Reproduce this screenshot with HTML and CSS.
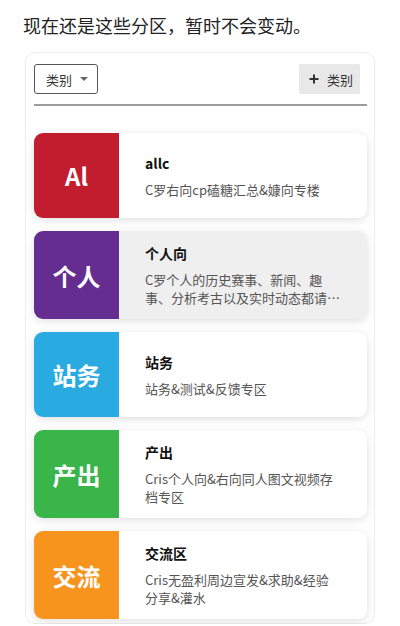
FILE: index.html
```html
<!DOCTYPE html>
<html lang="zh">
<head>
<meta charset="utf-8">
<link rel="stylesheet" href="styles.css">
</head>
<body>
<div class="page">
  <p class="intro">现在还是这些分区，暂时不会变动。</p>
  <div class="panel">
    <div class="toolbar">
      <div class="select">类别<span class="caret"></span></div>
      <div class="add">
        <svg class="plus" width="10" height="10" viewBox="0 0 10 10"><path d="M5 0.5V9.5M0.5 5H9.5" stroke="#333" stroke-width="2"/></svg>
        <span>类别</span>
      </div>
    </div>
    <div class="divider"></div>
    <div class="list">
      <div class="cat">
        <div class="badge red">Al</div>
        <div class="info"><div class="name">allc</div><div class="desc">C罗右向cp磕糖汇总&amp;嫝向专楼</div></div>
      </div>
      <div class="cat active">
        <div class="badge purple">个人</div>
        <div class="info"><div class="name">个人向</div><div class="desc clamp">C罗个人的历史赛事、新闻、趣事、分析考古以及实时动态都请发在这里</div></div>
      </div>
      <div class="cat">
        <div class="badge blue">站务</div>
        <div class="info"><div class="name">站务</div><div class="desc">站务&amp;测试&amp;反馈专区</div></div>
      </div>
      <div class="cat">
        <div class="badge green">产出</div>
        <div class="info"><div class="name">产出</div><div class="desc">Cris个人向&amp;右向同人图文视频存档专区</div></div>
      </div>
      <div class="cat">
        <div class="badge orange">交流</div>
        <div class="info"><div class="name">交流区</div><div class="desc">Cris无盈利周边宣发&amp;求助&amp;经验分享&amp;灌水</div></div>
      </div>
    </div>
  </div>
</div>
</body>
</html>
```
FILE: styles.css
```css
* { box-sizing: border-box; }
body {
  margin: 0;
  background: #fff;
  font-family: "Noto Sans CJK SC", "Noto Sans", sans-serif;
  color: #222;
}
.page { padding: 0 25px; }
.intro {
  margin: 12px 0 0 -2px;
  font-size: 18px;
  line-height: 26px;
  color: #222;
}
.panel {
  margin-top: 14px;
  border: 1px solid #ececec;
  border-radius: 10px;
  padding: 11px 7px 4px 8px;
}
.toolbar {
  display: flex;
  justify-content: space-between;
  align-items: center;
  padding-right: 7px;
}
.select {
  width: 64px;
  height: 30px;
  border: 1px solid #555;
  border-radius: 3px;
  display: flex;
  align-items: center;
  padding-left: 11px;
  font-size: 13px;
  color: #333;
}
.caret {
  width: 0; height: 0;
  margin-left: 8px;
  border-left: 4px solid transparent;
  border-right: 4px solid transparent;
  border-top: 4px solid #666;
}
.add {
  width: 61px;
  height: 30px;
  background: #e8e8e8;
  border-radius: 2px;
  display: flex;
  align-items: center;
  padding-left: 10px;
  gap: 8px;
  font-size: 13px;
  color: #333;
}
.plus { display: block; }
.divider {
  margin-top: 10px;
  height: 2px;
  background: #9c9c9c;
}
.list {
  margin-top: 27px;
  display: flex;
  flex-direction: column;
  gap: 13px;
}
.cat {
  display: flex;
  min-height: 85px;
  background: #fff;
  border-radius: 9px;
  overflow: hidden;
  box-shadow: 0 2px 8px rgba(0,0,0,0.13);
}
.cat.active { background: #efefef; }
.badge {
  flex: 0 0 85px;
  display: flex;
  align-items: center;
  justify-content: center;
  color: #fff;
  font-size: 24px;
  font-weight: 700;
}
.red { background: #c11d2f; }
.purple { background: #662d91; }
.blue { background: #29abe2; }
.green { background: #39b54a; }
.orange { background: #f7941d; }
.info {
  flex: 1;
  display: flex;
  flex-direction: column;
  justify-content: center;
  padding: 12px 26px;
  min-width: 0;
}
.name {
  font-size: 14px;
  line-height: 20px;
  font-weight: 700;
  color: #111;
}
.desc {
  margin-top: 8px;
  font-size: 13px;
  line-height: 18px;
  color: #555;
}
.clamp {
  display: -webkit-box;
  -webkit-line-clamp: 2;
  -webkit-box-orient: vertical;
  overflow: hidden;
}
```
